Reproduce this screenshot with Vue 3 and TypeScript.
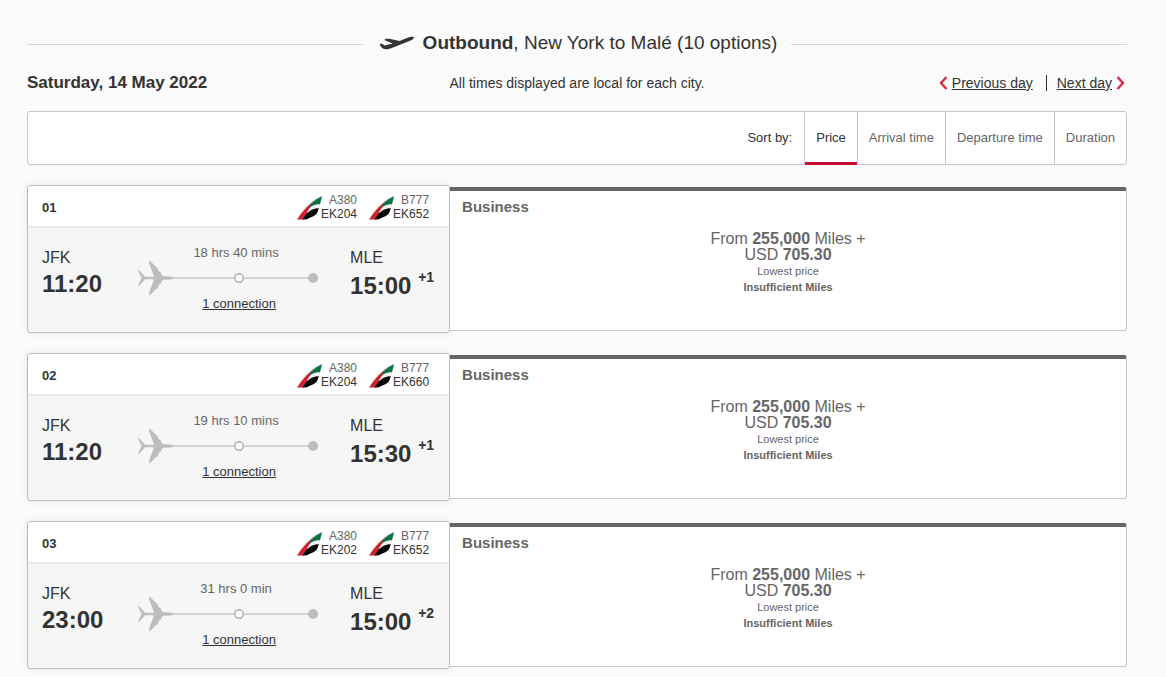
<script setup lang="ts">
import { ref } from 'vue'

interface Leg {
  aircraft: string
  flight: string
}

interface Option {
  id: string
  legs: Leg[]
  depart: string
  arrive: string
  dayOffset: string
  duration: string
}

const sorts = ['Price', 'Arrival time', 'Departure time', 'Duration']
const activeSort = ref('Price')

const options: Option[] = [
  {
    id: '01',
    legs: [{ aircraft: 'A380', flight: 'EK204' }, { aircraft: 'B777', flight: 'EK652' }],
    depart: '11:20', arrive: '15:00', dayOffset: '+1', duration: '18 hrs 40 mins',
  },
  {
    id: '02',
    legs: [{ aircraft: 'A380', flight: 'EK204' }, { aircraft: 'B777', flight: 'EK660' }],
    depart: '11:20', arrive: '15:30', dayOffset: '+1', duration: '19 hrs 10 mins',
  },
  {
    id: '03',
    legs: [{ aircraft: 'A380', flight: 'EK202' }, { aircraft: 'B777', flight: 'EK652' }],
    depart: '23:00', arrive: '15:00', dayOffset: '+2', duration: '31 hrs 0 min',
  },
]
</script>

<template>
  <main class="page">
    <header class="title">
      <svg class="takeoff" viewBox="0 0 36 16" aria-hidden="true">
        <path d="M.8 8.2 C1.8 7.4 3.6 7.7 5.6 9.4 L13.6 7.4 L5.2 4 C6.2 2.7 8.2 2.4 10.2 2.8 L20.5 5 L28.5 1.8 C31.5 .7 34.2 .4 34.8 1.2 C35.4 2.4 33.5 3.8 31 4.8 L14 11.4 C10.5 12.8 6.8 13.8 4.6 12.7 C2.8 11.8 1 10 .8 8.2Z" />
      </svg>
      <h1><strong>Outbound</strong>, New York to Malé (10 options)</h1>
    </header>

    <div class="dates">
      <h2>Saturday, 14 May 2022</h2>
      <p>All times displayed are local for each city.</p>
      <nav class="days">
        <a href="#previous">
          <svg viewBox="0 0 9 14" aria-hidden="true"><path d="M7.5 1 L2 7 L7.5 13" /></svg>
          <span>Previous day</span>
        </a>
        <a href="#next" class="next">
          <span>Next day</span>
          <svg viewBox="0 0 9 14" aria-hidden="true"><path d="M1.5 1 L7 7 L1.5 13" /></svg>
        </a>
      </nav>
    </div>

    <div class="sortbar">
      <span class="sort-label">Sort by:</span>
      <button
        v-for="s in sorts"
        :key="s"
        type="button"
        :class="{ active: s === activeSort }"
        @click="activeSort = s"
      >{{ s }}</button>
    </div>

    <article v-for="o in options" :key="o.id" class="option">
      <section class="flight">
        <div class="flight-head">
          <strong class="number">{{ o.id }}</strong>
          <div v-for="leg in o.legs" :key="leg.flight" class="leg">
            <svg class="tail" viewBox="0 0 26 25" aria-hidden="true">
              <path class="fin" d="M0 24.5 C5 15 14 4.5 25.3 .3 L23 9.5 L21.3 15 L8 22Z" />
              <path class="red" d="M0 24.5 C4 18.5 10 11 17.5 5.8 C13.5 11.5 11 16 6.8 24.5Z" />
              <path class="green" d="M12 13.2 C14.5 7.5 19 3.4 25 1.4 L23 9.2 C18.5 8.8 15.5 10.3 12 13.2Z" />
              <path class="white" d="M9.4 18.5 C12 13 16 9.8 22.9 9.6 L21.8 13.2 C16.5 13 12.5 15 9.4 18.5Z" />
              <path class="black" d="M5.6 24.5 C8.5 19 13 13.6 21.8 13.3 C20.8 17.5 19.2 20.2 16.4 21.2 C14 22 11 24.2 8.5 24.5Z" />
            </svg>
            <div class="leg-text">
              <span>{{ leg.aircraft }}</span>
              <span class="code">{{ leg.flight }}</span>
            </div>
          </div>
        </div>
        <div class="flight-body">
          <div class="place">
            <span class="airport">JFK</span>
            <strong class="time">{{ o.depart }}</strong>
          </div>
          <div class="route">
            <span class="duration">{{ o.duration }}</span>
            <svg class="track" viewBox="0 0 200 34" aria-hidden="true">
              <path class="line" d="M30 17 H174" />
              <path class="plane" d="M0 9.5 H1.5 L7 15.7 H16 L10.5 .5 H13 L18 6.2 L19.8 6.6 V8.6 L21.6 11 L23 11.4 V13 L25.5 15.3 L33 15.5 C36 16 36 18 33 18.5 L25.5 18.7 L23 21 V22.6 L21.6 23 L19.8 25.4 V27.4 L18 27.8 L13 33.5 H10.5 L16 18.3 H7 L1.5 24.5 H0 L3.5 17Z" />
              <circle class="stop" cx="101" cy="17" r="4.2" />
              <circle class="end" cx="175" cy="17" r="5" />
            </svg>
            <a href="#connection">1 connection</a>
          </div>
          <div class="place arrival">
            <span class="airport">MLE</span>
            <strong class="time">{{ o.arrive }} <sup>{{ o.dayOffset }}</sup></strong>
          </div>
        </div>
      </section>
      <section class="fare">
        <h3>Business</h3>
        <div class="price">
          <p>From <strong>255,000</strong> Miles +</p>
          <p>USD <strong>705.30</strong></p>
          <small>Lowest price</small>
          <small><strong>Insufficient Miles</strong></small>
        </div>
      </section>
    </article>
  </main>
</template>

<style>
body {
  margin: 0;
  background: #fbfbfb;
}
</style>

<style scoped>
.page {
  padding: 28px 39px 8px 27px;
  font-family: "Liberation Sans", Arial, sans-serif;
  font-size: 13px;
  color: #333;
}
h1, h2, h3, p {
  margin: 0;
}
.title {
  display: flex;
  align-items: center;
  height: 32px;
}
.title::before, .title::after {
  content: "";
  flex: 1;
  height: 1px;
  background: #d6d6d6;
}
.title::before {
  margin-right: 16px;
}
.title::after {
  margin-left: 14px;
}
.takeoff {
  width: 36px;
  height: 16px;
  margin-right: 8px;
  fill: #333;
}
h1 {
  padding-bottom: 2px;
  font-size: 19px;
  line-height: 30px;
  font-weight: 400;
}
.dates {
  display: grid;
  grid-template-columns: 1fr auto 1fr;
  align-items: center;
  height: 46px;
  font-size: 14px;
}
h2 {
  font-size: 17px;
}
.days {
  display: flex;
  justify-content: flex-end;
  padding-right: 2px;
}
.days a {
  display: flex;
  align-items: center;
  gap: 4px;
  line-height: 16px;
  color: #333;
  text-decoration: none;
}
.days span {
  text-decoration: underline;
}
.days svg {
  width: 9px;
  height: 14px;
  fill: none;
  stroke: #d5294d;
  stroke-width: 2.4;
}
.days .next {
  margin-left: 13px;
  padding-left: 10px;
  border-left: 1px solid #333;
}
.sortbar {
  display: flex;
  justify-content: flex-end;
  height: 52px;
  margin: 5px 0 20px;
  border: 1px solid #c6c6c6;
  border-radius: 3px;
  background: #fff;
}
.sort-label {
  padding-right: 12px;
  line-height: 52px;
}
button {
  margin-bottom: -1px;
  padding: 0 11px 2px;
  border: 0;
  border-left: 1px solid #c6c6c6;
  background: none;
  font: inherit;
  color: #666;
  cursor: pointer;
}
button.active {
  color: #333;
  box-shadow: inset 0 -3px #c60c30;
}
.option {
  display: grid;
  grid-template-columns: 5fr 8fr;
  align-items: start;
  margin-bottom: 20px;
}
.flight {
  border: 1px solid #c0c0c0;
  border-radius: 3px;
  background: #f6f6f6;
  box-shadow: 0 0 8px rgba(0, 0, 0, 0.08);
}
.flight-head {
  display: flex;
  align-items: center;
  gap: 12px;
  height: 40px;
  padding: 0 20px 0 14px;
  border-radius: 3px 3px 0 0;
  background: #fff;
  box-shadow: 0 1px 3px rgba(0, 0, 0, 0.1);
}
.number {
  margin-right: auto;
  padding-top: 2px;
}
.leg {
  display: flex;
  align-items: center;
  padding-top: 2px;
}
.tail {
  width: 26px;
  height: 25px;
  margin-right: -2px;
}
.fin { fill: #e4e4e4; }
.red { fill: #d3202f; }
.green { fill: #087344; }
.white { fill: #f4f4f4; }
.black { fill: #050505; }
.leg-text {
  display: flex;
  flex-direction: column;
  font-size: 12px;
  line-height: 14px;
  text-align: right;
  color: #666;
}
.code {
  color: #333;
}
.flight-body {
  display: flex;
  height: 106px;
  padding-left: 14px;
}
.place {
  display: flex;
  flex-direction: column;
  width: 84px;
  padding-top: 22px;
}
.airport {
  font-size: 16px;
  line-height: 20px;
}
.time {
  font-size: 24px;
  line-height: 32px;
}
.arrival .time {
  line-height: 36px;
}
sup {
  font-size: 14px;
  line-height: 1;
  vertical-align: 12px;
}
.route {
  display: flex;
  flex: 1;
  flex-direction: column;
  align-items: center;
  padding-top: 19px;
}
.duration {
  padding-right: 4px;
  line-height: 16px;
  color: #666;
}
.track {
  flex: none;
  width: 200px;
  height: 34px;
}
.line {
  stroke: #d2d2d2;
  stroke-width: 2;
}
.plane, .end {
  fill: #bdbdbd;
}
.stop {
  fill: #fff;
  stroke: #bdbdbd;
  stroke-width: 2;
}
.route a {
  padding-left: 2px;
  line-height: 18px;
  color: #333;
}
.arrival {
  width: 99px;
}
.fare {
  height: 139px;
  margin-top: 2px;
  border: 1px solid #c6c6c6;
  border-top: 4px solid #666;
  border-left: 0;
  border-radius: 0 3px 3px 0;
  background: #fff;
  color: #666;
}
h3 {
  padding: 6px 12px 0;
  font-size: 15px;
  line-height: 20px;
}
.price {
  padding-top: 14px;
  text-align: center;
}
.price p {
  font-size: 16px;
  line-height: 16px;
}
small {
  display: block;
  font-size: 11px;
  line-height: 16px;
}
</style>
